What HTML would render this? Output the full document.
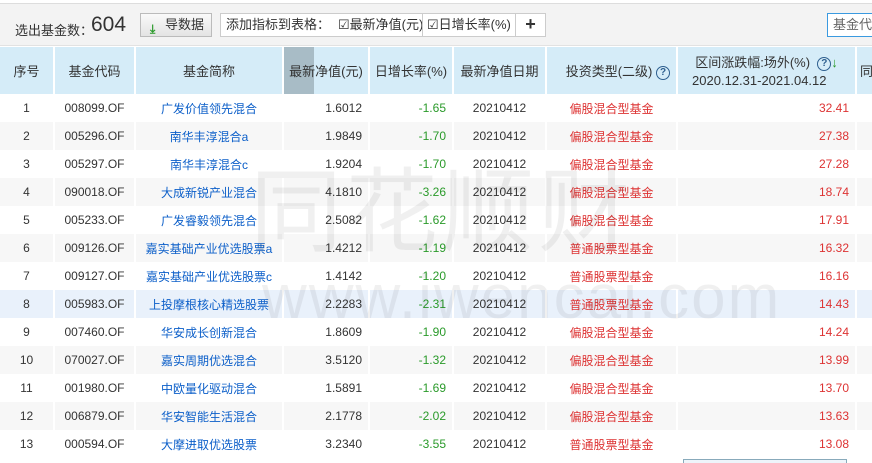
<!DOCTYPE html><html><head><meta charset="utf-8"><style>
*{margin:0;padding:0;box-sizing:border-box}
body{width:872px;height:462px;overflow:hidden;background:#fff;font-family:"Liberation Sans","Noto Sans CJK SC",sans-serif;font-size:12px;color:#333;position:relative}
.tb{position:absolute;left:0;top:3px;width:872px;height:43px;background:#f3f3f3;border-top:1px solid #ddd;border-bottom:1px solid #e2e2e2}
.abs{position:absolute}
table{position:absolute;left:0;top:47px;border-collapse:collapse;table-layout:fixed;width:880px}
td{height:28px;border-right:2px solid #fff;white-space:nowrap;overflow:hidden;padding:0 6px;font-size:12px}
th{height:47px;background:#d5ecf8;border-right:2px solid #fff;font-weight:normal;font-size:13px;color:#333}
tr:nth-child(odd) td{background:#f7f7f7}
tr.hl td{background:#e9f1fb!important}
.c{text-align:center}.r{text-align:right}
.n{color:#0c5fc9;text-align:center}
.g{color:#2a9a2a;text-align:right}
.red{color:#d33;text-align:center}
.rr{color:#d33;text-align:right}
.q{display:inline-block;width:14px;height:14px;border:1.5px solid #2e5f8f;border-radius:50%;font-size:10px;line-height:11px;text-align:center;color:#2e5f8f;font-weight:bold;vertical-align:middle}
.wm{position:absolute;color:rgba(0,0,0,0.06);pointer-events:none;font-family:"Noto Sans CJK SC",sans-serif}
</style></head><body>
<div class="tb">
<div class="abs" style="left:15px;top:16px;font-size:13px">选出基金数：</div>
<div class="abs" style="left:91px;top:9px;font-size:21px;color:#333">604</div>
<div class="abs" style="left:140px;top:9px;width:72px;height:24px;border:1px solid #bbb;background:linear-gradient(#fafafa,#e4e4e4);font-size:13px;line-height:22px;padding-left:24px"><span style="position:absolute;left:9px;top:4px;color:#2a9a2a;font-size:12px;font-weight:bold">⤓</span>导数据</div>
<div class="abs" style="left:220px;top:9px;width:296px;height:24px;border:1px solid #ccc;background:#fff;font-size:13px;line-height:22px;padding-left:5px">添加指标到表格：<span style="margin-left:8px">☑最新净值(元)</span></div>
<div class="abs" style="left:422px;top:9px;width:94px;height:24px;font-size:13px;line-height:22px;padding-left:4px;background:#fff;border:1px solid #ccc">☑日增长率(%)</div>
<div class="abs" style="left:516px;top:9px;width:30px;height:24px;border:1px solid #ccc;border-left:none;background:#fff;font-size:18px;line-height:21px;text-align:center;font-weight:bold">+</div>
<div class="abs" style="left:827px;top:9px;width:60px;height:24px;border:1px solid #3a9ae0;background:#fff;font-size:13px;line-height:22px;padding-left:5px;color:#666">基金代</div>
</div>
<table>
<colgroup><col style="width:54px"><col style="width:81px"><col style="width:148px"><col style="width:86px"><col style="width:84px"><col style="width:93px"><col style="width:131px"><col style="width:179px"><col style="width:24px"></colgroup>
<tr><th>序号</th><th>基金代码</th><th>基金简称</th><th style="background:linear-gradient(90deg,#a8bcc6 0,#a8bcc6 30px,#d5ecf8 30px)">最新净值(元)</th><th>日增长率(%)</th><th>最新净值日期</th><th style="text-align:right;padding-right:6px">投资类型(二级) <span class="q">?</span></th><th style="line-height:18px;padding-top:3px">区间涨跌幅:场外(%)&nbsp;&nbsp;<span class="q">?</span><span style="color:#2a9a2a">↓</span><br>2020.12.31-2021.04.12&nbsp;&nbsp;&nbsp;&nbsp;</th><th style="text-align:left;padding-left:3px">同</th></tr>
<tr><td class="c">1</td><td class="c">008099.OF</td><td class="n">广发价值领先混合</td><td class="r">1.6012</td><td class="g">-1.65</td><td class="c">20210412</td><td class="red">偏股混合型基金</td><td class="rr">32.41</td><td></td></tr>
<tr><td class="c">2</td><td class="c">005296.OF</td><td class="n">南华丰淳混合a</td><td class="r">1.9849</td><td class="g">-1.70</td><td class="c">20210412</td><td class="red">偏股混合型基金</td><td class="rr">27.38</td><td></td></tr>
<tr><td class="c">3</td><td class="c">005297.OF</td><td class="n">南华丰淳混合c</td><td class="r">1.9204</td><td class="g">-1.70</td><td class="c">20210412</td><td class="red">偏股混合型基金</td><td class="rr">27.28</td><td></td></tr>
<tr><td class="c">4</td><td class="c">090018.OF</td><td class="n">大成新锐产业混合</td><td class="r">4.1810</td><td class="g">-3.26</td><td class="c">20210412</td><td class="red">偏股混合型基金</td><td class="rr">18.74</td><td></td></tr>
<tr><td class="c">5</td><td class="c">005233.OF</td><td class="n">广发睿毅领先混合</td><td class="r">2.5082</td><td class="g">-1.62</td><td class="c">20210412</td><td class="red">偏股混合型基金</td><td class="rr">17.91</td><td></td></tr>
<tr><td class="c">6</td><td class="c">009126.OF</td><td class="n">嘉实基础产业优选股票a</td><td class="r">1.4212</td><td class="g">-1.19</td><td class="c">20210412</td><td class="red">普通股票型基金</td><td class="rr">16.32</td><td></td></tr>
<tr><td class="c">7</td><td class="c">009127.OF</td><td class="n">嘉实基础产业优选股票c</td><td class="r">1.4142</td><td class="g">-1.20</td><td class="c">20210412</td><td class="red">普通股票型基金</td><td class="rr">16.16</td><td></td></tr>
<tr class="hl"><td class="c">8</td><td class="c">005983.OF</td><td class="n">上投摩根核心精选股票</td><td class="r">2.2283</td><td class="g">-2.31</td><td class="c">20210412</td><td class="red">普通股票型基金</td><td class="rr">14.43</td><td></td></tr>
<tr><td class="c">9</td><td class="c">007460.OF</td><td class="n">华安成长创新混合</td><td class="r">1.8609</td><td class="g">-1.90</td><td class="c">20210412</td><td class="red">偏股混合型基金</td><td class="rr">14.24</td><td></td></tr>
<tr><td class="c">10</td><td class="c">070027.OF</td><td class="n">嘉实周期优选混合</td><td class="r">3.5120</td><td class="g">-1.32</td><td class="c">20210412</td><td class="red">偏股混合型基金</td><td class="rr">13.99</td><td></td></tr>
<tr><td class="c">11</td><td class="c">001980.OF</td><td class="n">中欧量化驱动混合</td><td class="r">1.5891</td><td class="g">-1.69</td><td class="c">20210412</td><td class="red">偏股混合型基金</td><td class="rr">13.70</td><td></td></tr>
<tr><td class="c">12</td><td class="c">006879.OF</td><td class="n">华安智能生活混合</td><td class="r">2.1778</td><td class="g">-2.02</td><td class="c">20210412</td><td class="red">偏股混合型基金</td><td class="rr">13.63</td><td></td></tr>
<tr><td class="c">13</td><td class="c">000594.OF</td><td class="n">大摩进取优选股票</td><td class="r">3.2340</td><td class="g">-3.55</td><td class="c">20210412</td><td class="red">普通股票型基金</td><td class="rr">13.08</td><td></td></tr>
</table>
<div class="wm" style="left:250px;top:150px;font-size:92px;letter-spacing:4px;line-height:110px">同花顺财</div>
<div class="wm" style="left:262px;top:262px;font-size:62px;font-family:'Liberation Sans',sans-serif;letter-spacing:2px">www.iwencai.com</div>
<div class="abs" style="left:683px;top:459px;width:164px;height:4px;border:1px solid #8ab;border-bottom:none;background:#eef4fa"></div>
</body></html>
